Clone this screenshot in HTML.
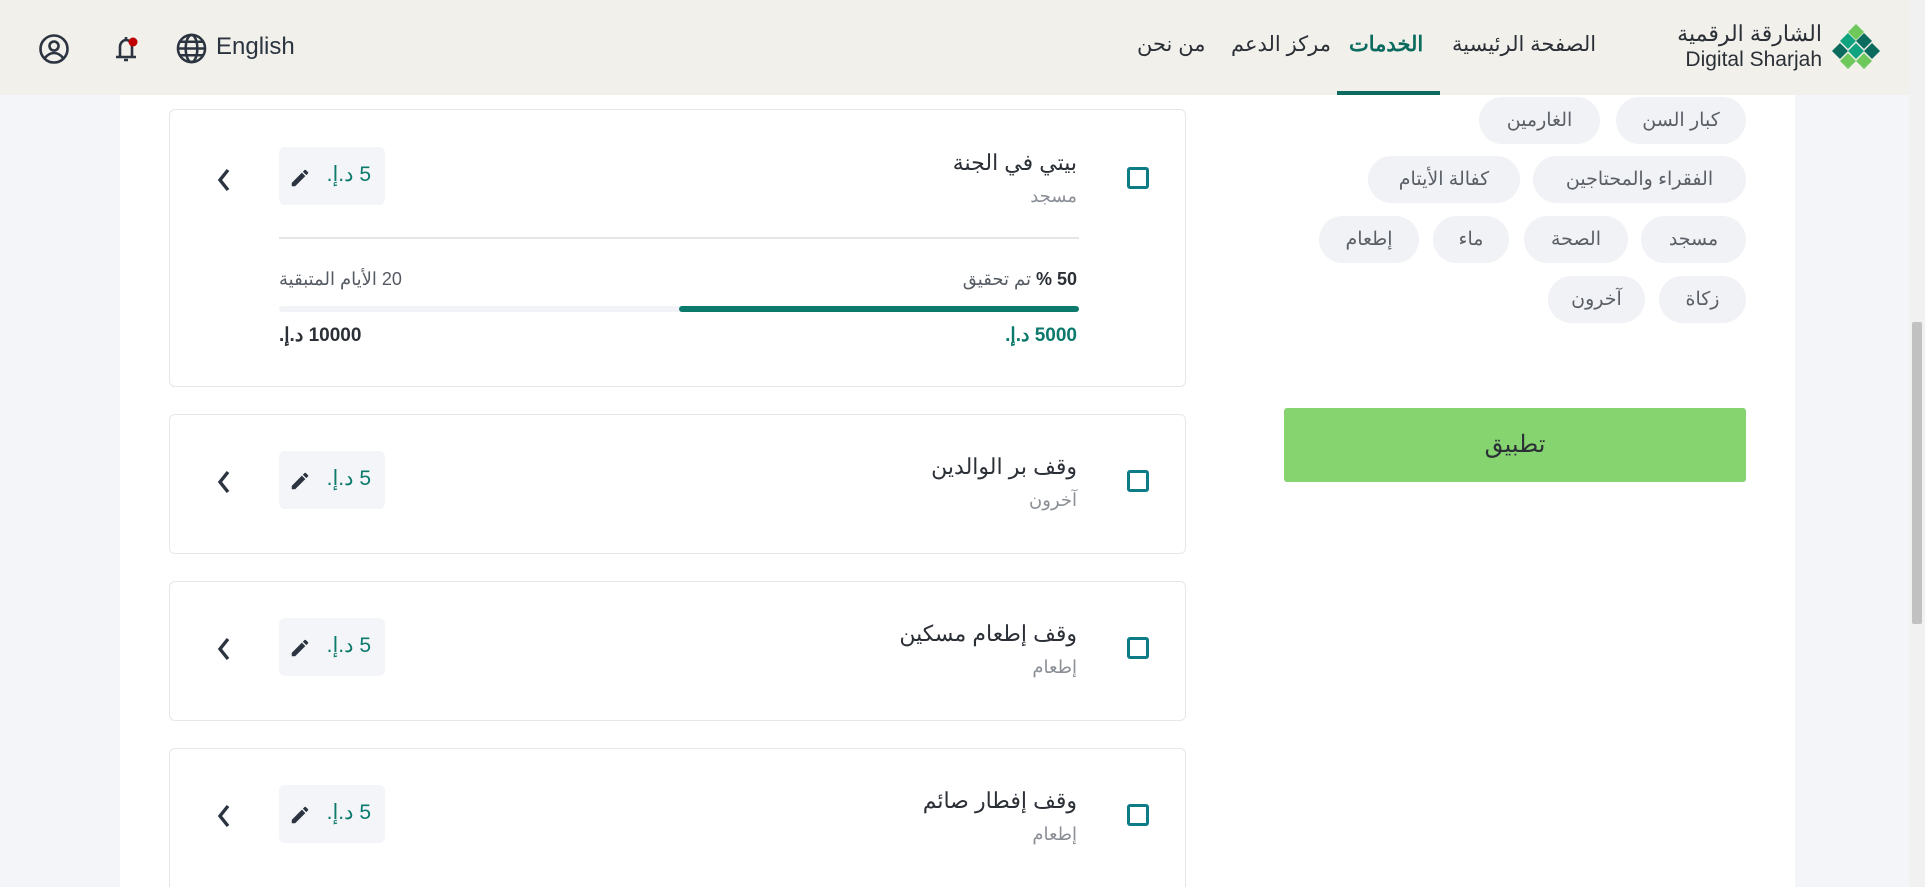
<!DOCTYPE html>
<html style="width:1925px;height:887px;overflow:hidden"><head><meta charset="utf-8"><style>
*{margin:0;padding:0;box-sizing:border-box}
body{width:1925px;height:887px;overflow:hidden;background:#f4f5f9;font-family:"Liberation Sans","Noto Sans CJK SC",sans-serif;position:relative;color:#2b2f36}
.abs{position:absolute}
.main{left:120px;top:0;width:1675px;height:887px;background:#fff}
.hdr{left:0;top:0;width:1909px;height:95px;background:#f1f0ea}
.nav{top:32px;font-size:21px;color:#2b2f36;white-space:nowrap}
.card{left:169px;width:1017px;background:#fff;border:1px solid #e6e7ea;border-radius:6px}
.cb{width:22px;height:22px;border:3px solid #0d7c86;border-radius:3px}
.title{right:108px;font-size:22px;color:#2b2f36;direction:rtl;white-space:nowrap}
.sub{right:108px;font-size:18px;color:#8a8f96;direction:rtl;white-space:nowrap}
.price{left:109px;width:106px;height:58px;background:#f4f5f9;border-radius:6px}
.price span{position:absolute;right:14px;top:15px;font-size:21px;color:#0b7a6c;direction:rtl}
.chev{left:46px}
.chip{height:47px;background:#f1f2f6;border-radius:24px;font-size:19px;color:#5a5f66;text-align:center;line-height:47px;direction:rtl;white-space:nowrap}
.scroll{left:1909px;top:0;width:16px;height:887px;background:#f1f1f1}
</style></head><body>
<div class="abs main"></div>
<div class="abs scroll"><div class="abs" style="left:3px;top:322px;width:10px;height:302px;background:#c1c1c1;border-radius:2px"></div></div>
<div class="abs hdr"></div>
<svg class="abs" style="left:38px;top:33px" width="32" height="32" viewBox="0 0 32 32" fill="none" stroke="#2b3440" stroke-width="2.6"><circle cx="16" cy="16" r="13.5"/><circle cx="16" cy="13" r="4.5"/><path d="M7 25c3-4 6-5 9-5s6 1 9 5"/></svg>
<svg class="abs" style="left:112px;top:33px" width="30" height="32" viewBox="0 0 30 32" fill="none" stroke="#2b3440" stroke-width="2.6"><path d="M4 24h20M8 24V14c0-4 3-7 6-7s6 3 6 7v10M14 7V4M12 27h4"/><circle cx="21" cy="9" r="4.5" fill="#c00000" stroke="none"/></svg>
<svg class="abs" style="left:176px;top:33px" width="31" height="31" viewBox="0 0 32 32" fill="none" stroke="#2b3440" stroke-width="2.6"><circle cx="16" cy="16" r="14"/><ellipse cx="16" cy="16" rx="6" ry="14"/><path d="M2 16h28M4 9h24M4 23h24"/></svg>
<div class="abs" style="left:216px;top:33px;font-size:24px;color:#2b3440">English</div>
<div class="abs nav" style="left:1137px" dir="rtl">من نحن</div>
<div class="abs nav" style="left:1231px" dir="rtl">مركز الدعم</div>
<div class="abs nav" style="left:1349px;font-weight:bold;color:#0b6b5f" dir="rtl">الخدمات</div>
<div class="abs nav" style="left:1452px" dir="rtl">الصفحة الرئيسية</div>
<div class="abs" style="left:1337px;top:91px;width:103px;height:4px;background:#0b6b5f"></div>
<div class="abs" style="left:1672px;top:20px;width:150px;text-align:right;font-size:22px;color:#2b2f36;line-height:28px" dir="rtl">الشارقة الرقمية</div>
<div class="abs" style="left:1672px;top:48px;width:150px;text-align:right;font-size:21px;color:#2b2f36">Digital Sharjah</div>
<svg class="abs" style="left:1832px;top:22px" width="48" height="50" viewBox="0 0 48 50"><path d="M16 10l8-8 8 8-8 8z" fill="#6ec85a"/><path d="M8 19l8-8 8 8-8 8z" fill="#10a37f"/><path d="M24 19l8-8 8 8-8 8z" fill="#0b6b5f"/><path d="M0 29l8-8 8 8-8 8z" fill="#0b6b5f"/><path d="M16 29l8-8 8 8-8 8z" fill="#10a37f"/><path d="M32 29l8-8 8 8-8 8z" fill="#0b6b5f"/><path d="M8 39l8-8 8 8-8 8z" fill="#6ec85a"/><path d="M24 39l8-8 8 8-8 8z" fill="#6ec85a"/></svg>

<div class="abs card" style="top:109px;height:278px">
 <div class="abs cb" style="left:957px;top:57px"></div>
 <div class="abs title" style="top:40px">بيتي في الجنة</div>
 <div class="abs sub" style="top:76px">مسجد</div>
 <div class="abs price" style="top:37px"><span>5 د.إ.</span></div>
 <svg class="abs" style="left:119px;top:57px" width="22" height="22" viewBox="0 0 24 24"><path d="M3 17.25V21h3.75L17.8 9.94l-3.75-3.75L3 17.25zM20.7 7.04a1 1 0 000-1.41l-2.34-2.34a1 1 0 00-1.41 0l-1.83 1.83 3.75 3.75 1.83-1.83z" fill="#2b3440"/></svg>
 <svg class="abs chev" style="top:57px" width="16" height="26" viewBox="0 0 16 26" fill="none" stroke="#2b3440" stroke-width="3.4"><path d="M12 3L4 13l8 10"/></svg>
 <div class="abs" style="left:109px;top:127px;width:800px;height:2px;background:#e4e5e7"></div>
 <div class="abs" style="right:108px;top:159px;font-size:18px;color:#555b63;direction:rtl"><b style="color:#2b2f36">50 %</b> تم تحقيق</div>
 <div class="abs" style="left:109px;top:159px;font-size:18px;color:#555b63;direction:rtl">20 الأيام المتبقية</div>
 <div class="abs" style="left:109px;top:196px;width:800px;height:6px;background:#f1f3f7;border-radius:3px"></div>
 <div class="abs" style="left:509px;top:196px;width:400px;height:6px;background:#0b7a6c;border-radius:3px"></div>
 <div class="abs" style="right:108px;top:214px;font-size:19px;font-weight:bold;color:#0b7a6c;direction:rtl">5000 د.إ.</div>
 <div class="abs" style="left:109px;top:214px;font-size:19px;font-weight:bold;color:#2b2f36;direction:rtl">10000 د.إ.</div>
</div>

<div class="abs card" style="top:414px;height:140px">
 <div class="abs cb" style="left:957px;top:55px"></div>
 <div class="abs title" style="top:39px">وقف بر الوالدين</div>
 <div class="abs sub" style="top:75px">آخرون</div>
 <div class="abs price" style="top:36px"><span>5 د.إ.</span></div>
 <svg class="abs" style="left:119px;top:55px" width="22" height="22" viewBox="0 0 24 24"><path d="M3 17.25V21h3.75L17.8 9.94l-3.75-3.75L3 17.25zM20.7 7.04a1 1 0 000-1.41l-2.34-2.34a1 1 0 00-1.41 0l-1.83 1.83 3.75 3.75 1.83-1.83z" fill="#2b3440"/></svg>
 <svg class="abs chev" style="top:54px" width="16" height="26" viewBox="0 0 16 26" fill="none" stroke="#2b3440" stroke-width="3.4"><path d="M12 3L4 13l8 10"/></svg>
</div>

<div class="abs card" style="top:581px;height:140px">
 <div class="abs cb" style="left:957px;top:55px"></div>
 <div class="abs title" style="top:39px">وقف إطعام مسكين</div>
 <div class="abs sub" style="top:75px">إطعام</div>
 <div class="abs price" style="top:36px"><span>5 د.إ.</span></div>
 <svg class="abs" style="left:119px;top:55px" width="22" height="22" viewBox="0 0 24 24"><path d="M3 17.25V21h3.75L17.8 9.94l-3.75-3.75L3 17.25zM20.7 7.04a1 1 0 000-1.41l-2.34-2.34a1 1 0 00-1.41 0l-1.83 1.83 3.75 3.75 1.83-1.83z" fill="#2b3440"/></svg>
 <svg class="abs chev" style="top:54px" width="16" height="26" viewBox="0 0 16 26" fill="none" stroke="#2b3440" stroke-width="3.4"><path d="M12 3L4 13l8 10"/></svg>
</div>

<div class="abs card" style="top:748px;height:139px;border-bottom:none;border-radius:6px 6px 0 0">
 <div class="abs cb" style="left:957px;top:55px"></div>
 <div class="abs title" style="top:39px">وقف إفطار صائم</div>
 <div class="abs sub" style="top:75px">إطعام</div>
 <div class="abs price" style="top:36px"><span>5 د.إ.</span></div>
 <svg class="abs" style="left:119px;top:55px" width="22" height="22" viewBox="0 0 24 24"><path d="M3 17.25V21h3.75L17.8 9.94l-3.75-3.75L3 17.25zM20.7 7.04a1 1 0 000-1.41l-2.34-2.34a1 1 0 00-1.41 0l-1.83 1.83 3.75 3.75 1.83-1.83z" fill="#2b3440"/></svg>
 <svg class="abs chev" style="top:54px" width="16" height="26" viewBox="0 0 16 26" fill="none" stroke="#2b3440" stroke-width="3.4"><path d="M12 3L4 13l8 10"/></svg>
</div>

<div class="abs chip" style="left:1616px;top:97px;width:130px">كبار السن</div>
<div class="abs chip" style="left:1479px;top:97px;width:121px">الغارمين</div>
<div class="abs chip" style="left:1533px;top:156px;width:213px">الفقراء والمحتاجين</div>
<div class="abs chip" style="left:1368px;top:156px;width:152px">كفالة الأيتام</div>
<div class="abs chip" style="left:1641px;top:216px;width:105px">مسجد</div>
<div class="abs chip" style="left:1524px;top:216px;width:104px">الصحة</div>
<div class="abs chip" style="left:1433px;top:216px;width:76px">ماء</div>
<div class="abs chip" style="left:1319px;top:216px;width:100px">إطعام</div>
<div class="abs chip" style="left:1659px;top:276px;width:87px">زكاة</div>
<div class="abs chip" style="left:1548px;top:276px;width:97px">آخرون</div>

<div class="abs" style="left:1284px;top:408px;width:462px;height:74px;background:#86d46f;border-radius:3px;text-align:center;line-height:74px;font-size:24px;color:#2b2f36" dir="rtl">تطبيق</div>
</body></html>
